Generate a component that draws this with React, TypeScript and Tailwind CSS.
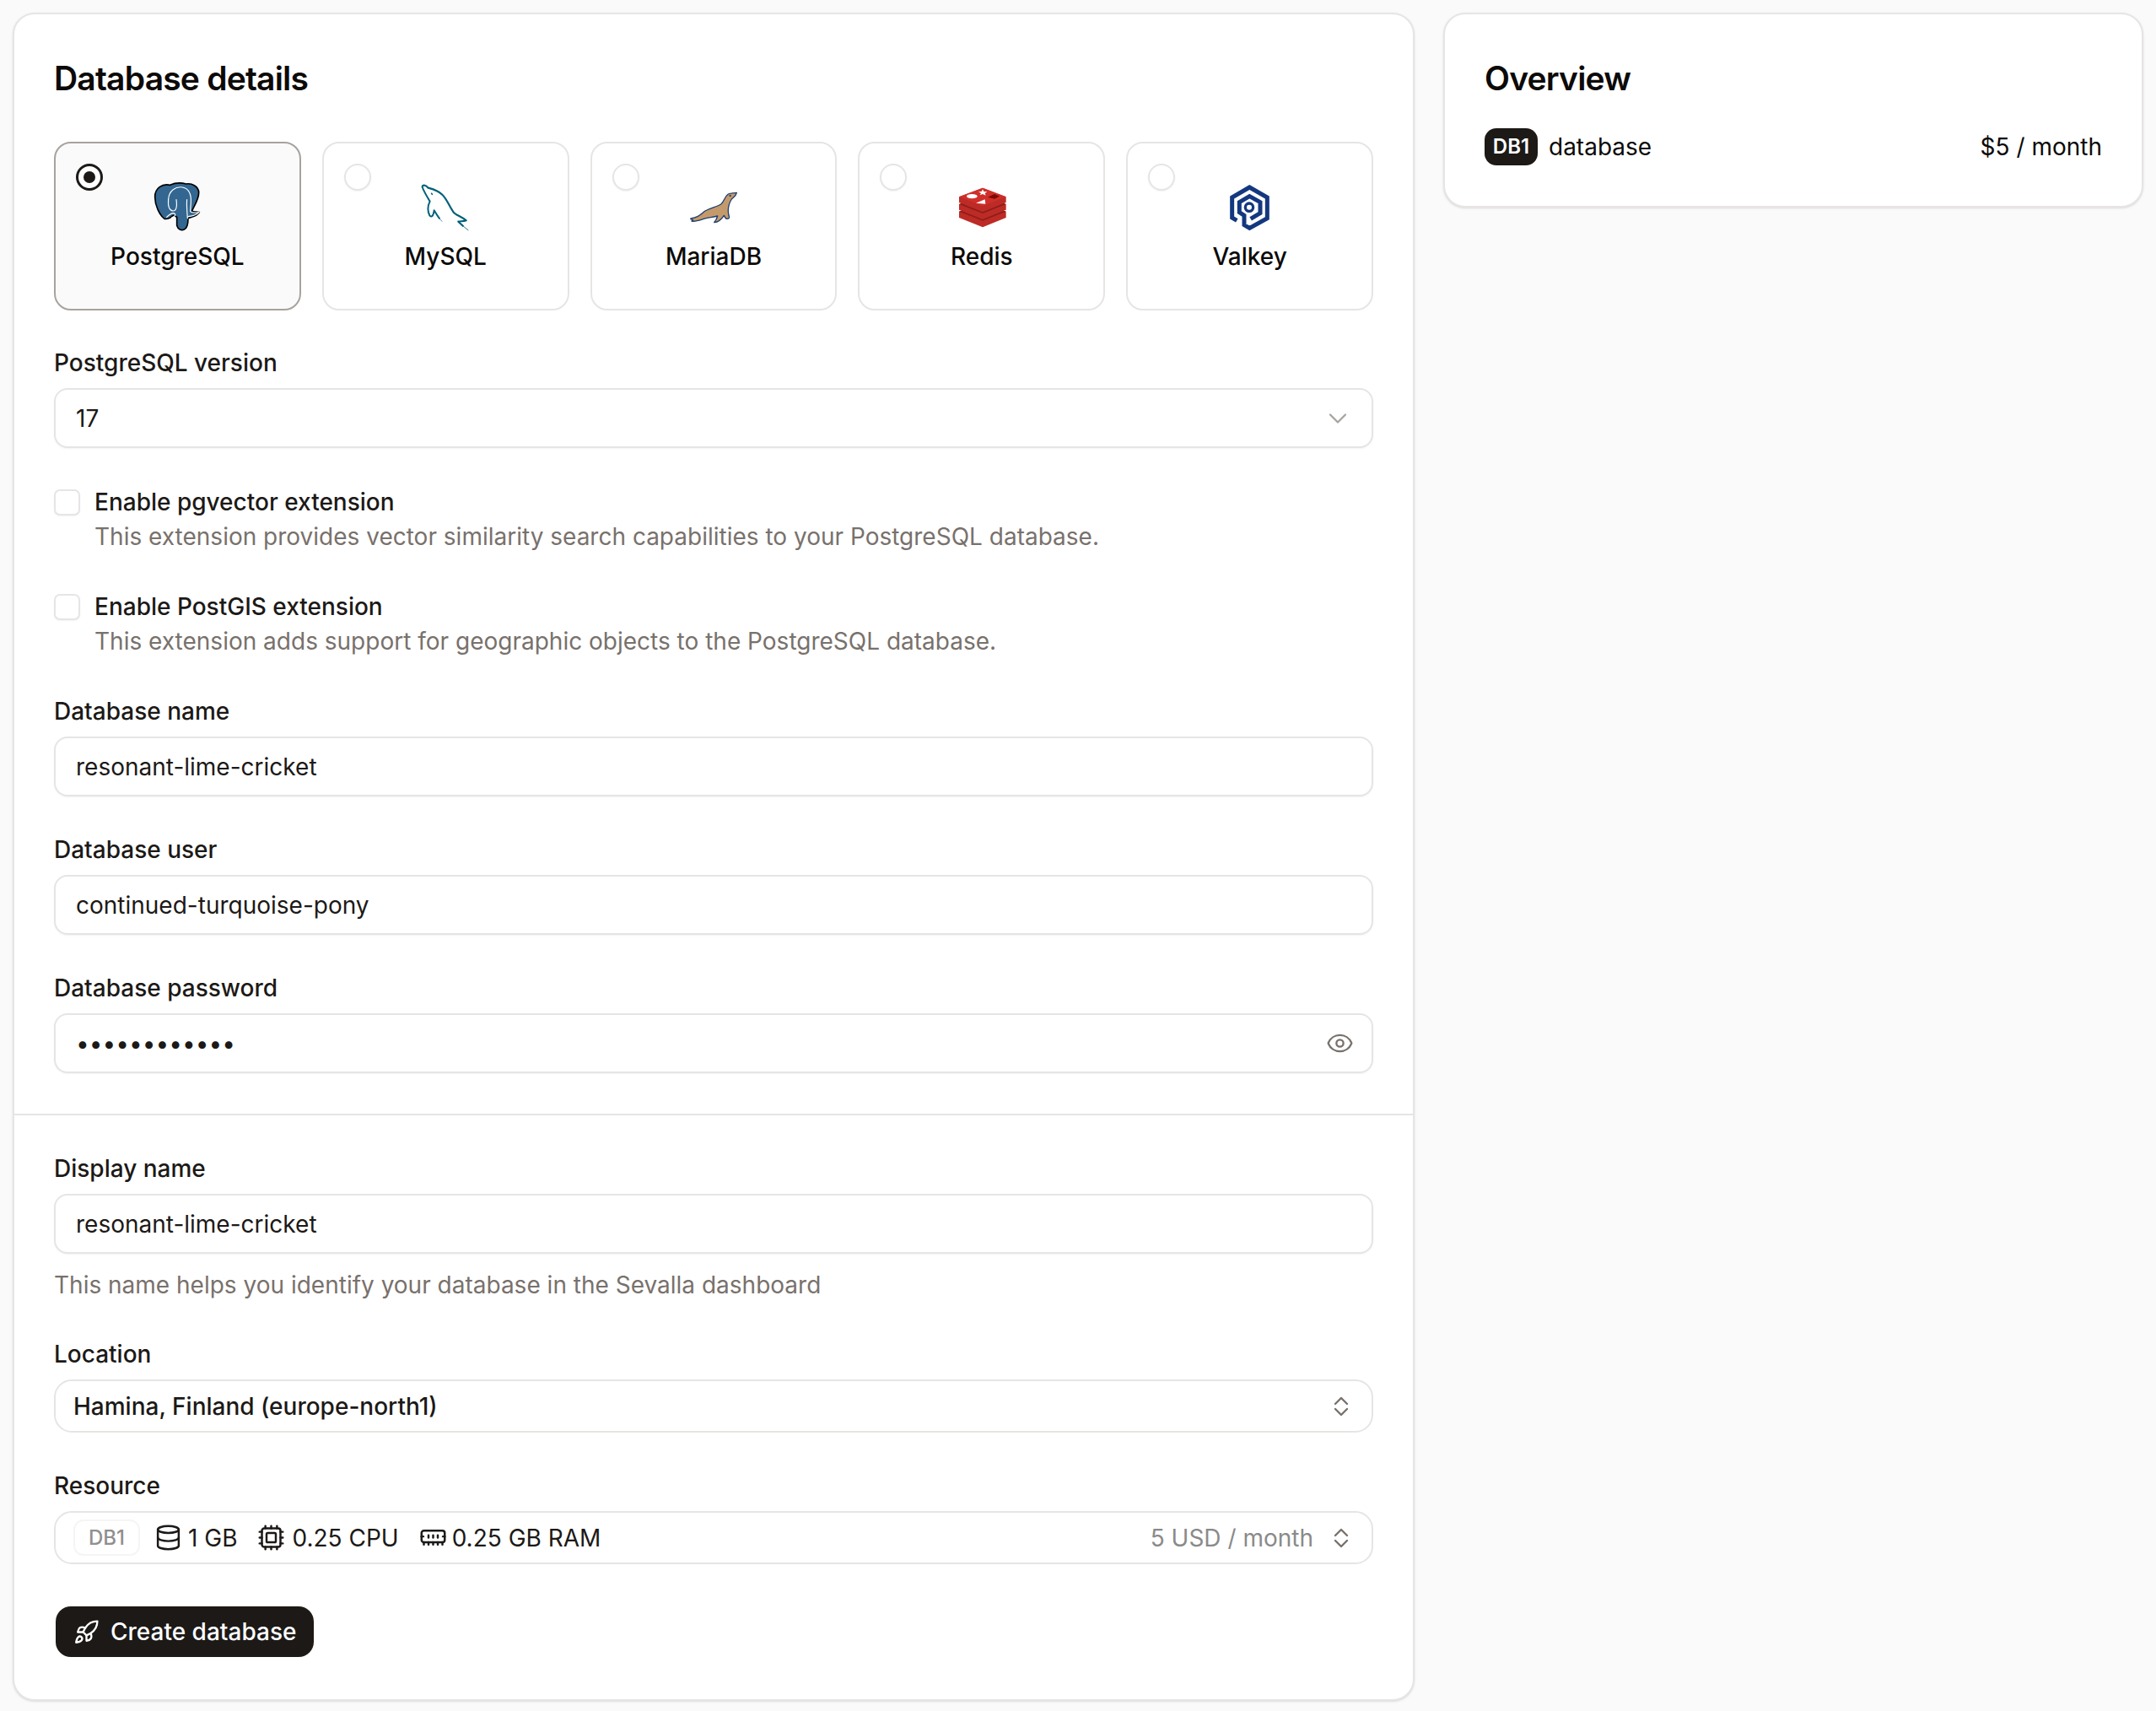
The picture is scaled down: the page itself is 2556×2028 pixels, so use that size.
import type { ReactNode } from "react";
import { ChevronDown, Cpu, Database, Eye, MemoryStick, Rocket } from "lucide-react";

function ElephantLogo() {
  return (
    <svg width="120" height="90" viewBox="-27 0 360 270" fill="none">
      <path
        d="M128 58C100 52 74 68 74 100C74 130 90 165 108 178C120 180 130 174 138 166C146 168 150 170 152 172L152 202C156 216 168 221 178 216C188 212 192 200 192 176C205 172 224 168 232 155C220 152 210 155 206 150C214 130 230 110 230 85C230 64 205 50 185 54C170 50 150 48 128 58Z"
        fill="#336791"
        stroke="#000"
        strokeWidth="5"
        strokeLinejoin="round"
      />
      <g stroke="#fff" strokeWidth="3.5" strokeLinecap="round">
        <path d="M122 108C124 78 148 62 172 66C192 70 204 88 202 120L200 150" />
        <path d="M122 108C120 130 124 148 138 150C148 150 154 140 150 110" />
        <path d="M188 110C186 124 188 150 190 176" />
        <path d="M116 172C122 166 130 158 140 158C150 160 148 170 134 174" />
        <path d="M200 152C208 158 220 156 230 155C222 165 208 168 192 170" />
      </g>
    </svg>
  );
}

function DolphinLogo() {
  return (
    <svg width="120" height="90" viewBox="-34 0 360 270" fill="none">
      <path
        d="M63 63C68 56 76 58 85 68C100 72 118 76 135 92C152 108 160 135 176 156C186 166 204 170 220 184C210 188 200 186 192 188L210 205"
        stroke="#00607a"
        strokeWidth="6.5"
        strokeLinejoin="round"
      />
      <path d="M208 203L228 219" stroke="#00607a" strokeWidth="2.5" />
      <path
        d="M63 63C70 82 80 98 91 116C84 130 82 150 90 166C98 176 104 165 106 148C112 158 118 168 126 178"
        stroke="#00607a"
        strokeWidth="6"
        strokeLinejoin="round"
      />
      <path d="M124 176L135 188" stroke="#00607a" strokeWidth="2" />
      <path d="M96 86L100 93" stroke="#00607a" strokeWidth="4.5" />
    </svg>
  );
}

function SealLogo() {
  return (
    <svg width="120" height="90" viewBox="-42 0 360 270" fill="none">
      <path
        d="M220 85C210 88 200 85 190 90C178 98 176 116 165 125C150 136 128 138 108 150C96 158 88 170 70 174C62 175 58 176 56 178L64 182L60 186C75 190 95 180 112 176C125 173 140 172 152 168C150 176 146 184 140 191C152 190 165 182 175 166C178 172 180 178 186 178C192 178 196 175 192 166C188 150 190 128 202 108C210 100 218 96 220 85Z"
        fill="#c49a6c"
        stroke="#1f3f6f"
        strokeWidth="4"
        strokeLinejoin="round"
      />
      <circle cx="197" cy="96" r="3.5" fill="#1f3f6f" />
    </svg>
  );
}

function RedisLogo() {
  return (
    <svg width="120" height="90" viewBox="-21 0 360 270" fill="none">
      <path d="M78 152L162 120L245 152V174L162 208L78 174Z" fill="#bd2b26" />
      <path d="M78 152L162 120L245 152L162 185Z" fill="#8f1d18" />
      <path d="M78 126L162 94L245 126V146L162 180L78 146Z" fill="#bd2b26" />
      <path d="M78 126L162 94L245 126L162 159Z" fill="#8f1d18" />
      <path d="M78 100L162 68L245 100V120L162 154L78 120Z" fill="#bd2b26" />
      <path d="M78 100L162 68L245 100L162 133Z" fill="#cf2e2a" />
      <ellipse cx="124" cy="98" rx="19" ry="8" fill="#fff" />
      <path
        d="M162 73L166 81L178 82L170 87L173 95L162 90L152 94L156 87L147 82L158 81Z"
        fill="#fff"
      />
      <path d="M138 122L170 109L172 125Z" fill="#fff" />
      <path d="M180 101L204 90L222 98L204 107Z" fill="#7a0c00" />
    </svg>
  );
}

function ValkeyLogo() {
  return (
    <svg width="120" height="90" viewBox="-27 0 360 270" fill="none">
      <path
        d="M106 184L89 174V102L151 66L214 102V176L151 211L132 200V166L115 155V119L151 98L189 119V158L155 178"
        stroke="#14387f"
        strokeWidth="15"
      />
      <circle cx="150" cy="137" r="14" stroke="#14387f" strokeWidth="10" />
    </svg>
  );
}

function UpDownIcon() {
  return (
    <svg
      width="18"
      height="24"
      viewBox="0 0 18 24"
      fill="none"
      stroke="#78716c"
      strokeWidth="2.4"
      strokeLinecap="round"
      strokeLinejoin="round"
    >
      <path d="M2 9L9 2L16 9" />
      <path d="M2 15L9 22L16 15" />
    </svg>
  );
}

type EngineTileProps = {
  name: string;
  selected?: boolean;
  logo: ReactNode;
};

function EngineTile({ name, selected, logo }: EngineTileProps) {
  return (
    <div
      className={
        selected
          ? "relative flex h-[200px] flex-col items-center rounded-[20px] border-2 border-[#a8a29e] bg-[#fafafa]"
          : "relative flex h-[200px] flex-col items-center rounded-[20px] border-2 border-[#e7e5e4] bg-white"
      }
    >
      {selected ? (
        <span className="absolute left-[24px] top-[24px] flex h-[32px] w-[32px] items-center justify-center rounded-full border-[3px] border-[#1c1917] bg-white">
          <span className="h-[14px] w-[14px] rounded-full bg-[#1c1917]" />
        </span>
      ) : (
        <span className="absolute left-[24px] top-[24px] h-[32px] w-[32px] rounded-full border-2 border-[#e7e5e4] bg-white shadow-xs" />
      )}
      <div className="mt-[30px] flex h-[90px] w-[120px] justify-center">{logo}</div>
      <span className="mt-[-4px] text-[28px] leading-[36px] font-medium text-[#0c0a09]">
        {name}
      </span>
    </div>
  );
}

type FieldProps = {
  label: string;
  className?: string;
  children: ReactNode;
};

function Field({ label, className, children }: FieldProps) {
  return (
    <div className={className}>
      <label className="mb-[12px] block text-[28px] leading-[36px] font-medium text-[#1c1917]">
        {label}
      </label>
      {children}
    </div>
  );
}

function TextInput({ value, type = "text" }: { value: string; type?: string }) {
  return (
    <input
      readOnly
      type={type}
      value={value}
      className="block h-[71px] w-full rounded-[16px] border-2 border-[#e7e5e4] bg-white px-[24px] text-[28px] text-[#1c1917] shadow-xs outline-none"
    />
  );
}

function CheckRow({
  title,
  text,
  className,
}: {
  title: string;
  text: string;
  className?: string;
}) {
  return (
    <div className={`flex gap-[17px] ${className ?? ""}`}>
      <span className="mt-[5px] h-[31px] w-[31px] shrink-0 rounded-[7px] border-2 border-[#e7e5e4] bg-white shadow-xs" />
      <div>
        <p className="text-[28px] leading-[41px] font-medium text-[#1c1917]">{title}</p>
        <p className="text-[28px] leading-[41px] text-[#78716c]">{text}</p>
      </div>
    </div>
  );
}

export default function App() {
  return (
    <div
      className="flex min-h-[2028px] items-start gap-[34px] bg-[#fafafa] pl-[15px] pt-[15px] text-[#0c0a09]"
      style={{ fontFamily: "Inter, sans-serif" }}
    >
      <main className="w-[1662px] rounded-[26px] border-2 border-[#e7e5e4] bg-white shadow-sm">
        <section className="px-[47px] pb-[48px] pt-[55px]">
          <h2 className="text-[39px] leading-[42px] font-semibold tracking-[-0.8px] text-[#0c0a09]">
            Database details
          </h2>

          <div className="mt-[54px] grid grid-cols-5 gap-[25px]">
            <EngineTile name="PostgreSQL" selected logo={<ElephantLogo />} />
            <EngineTile name="MySQL" logo={<DolphinLogo />} />
            <EngineTile name="MariaDB" logo={<SealLogo />} />
            <EngineTile name="Redis" logo={<RedisLogo />} />
            <EngineTile name="Valkey" logo={<ValkeyLogo />} />
          </div>

          <Field label="PostgreSQL version" className="mt-[44px]">
            <div className="flex h-[71px] items-center justify-between rounded-[16px] border-2 border-[#e7e5e4] bg-white pl-[24px] pr-[22px] shadow-xs">
              <span className="text-[28px] text-[#1c1917]">17</span>
              <ChevronDown size={36} strokeWidth={1.5} className="text-[#a8a29e]" />
            </div>
          </Field>

          <CheckRow
            className="mt-[44px]"
            title="Enable pgvector extension"
            text="This extension provides vector similarity search capabilities to your PostgreSQL database."
          />
          <CheckRow
            className="mt-[42px]"
            title="Enable PostGIS extension"
            text="This extension adds support for geographic objects to the PostgreSQL database."
          />

          <Field label="Database name" className="mt-[44px]">
            <TextInput value="resonant-lime-cricket" />
          </Field>
          <Field label="Database user" className="mt-[45px]">
            <TextInput value="continued-turquoise-pony" />
          </Field>
          <Field label="Database password" className="mt-[45px]">
            <div className="relative">
              <TextInput type="password" value="abcdefghijkl" />
              <Eye
                size={33}
                strokeWidth={1.7}
                className="absolute right-[23px] top-[19px] text-[#78716c]"
              />
            </div>
          </Field>
        </section>

        <section className="border-t-2 border-[#e7e5e4] px-[47px] pb-[50px] pt-[45px]">
          <Field label="Display name">
            <TextInput value="resonant-lime-cricket" />
            <p className="mt-[19px] text-[28px] leading-[36px] text-[#78716c]">
              This name helps you identify your database in the Sevalla dashboard
            </p>
          </Field>

          <Field label="Location" className="mt-[46px]">
            <div className="flex h-[63px] items-center justify-between rounded-[21px] border-2 border-[#e7e5e4] bg-white pl-[21px] pr-[27px]">
              <span className="text-[28px] font-medium text-[#1c1917]">
                Hamina, Finland (europe-north1)
              </span>
              <UpDownIcon />
            </div>
          </Field>

          <Field label="Resource" className="mt-[45px]">
            <div className="flex h-[63px] items-center justify-between rounded-[21px] border-2 border-[#e7e5e4] bg-white pl-[21px] pr-[27px]">
              <div className="flex items-center text-[28px] text-[#1c1917]">
                <span className="mr-[17px] flex h-[43px] w-[79px] items-center justify-center rounded-[12px] border-2 border-[#f5f5f4] text-[24px] font-medium text-[#8f8f8f]">
                  DB1
                </span>
                <Database size={33} strokeWidth={1.8} className="mr-[7px]" />
                <span>1 GB</span>
                <Cpu size={33} strokeWidth={1.8} className="ml-[24px] mr-[8px]" />
                <span>0.25 CPU</span>
                <MemoryStick size={33} strokeWidth={1.8} className="ml-[24px] mr-[6px]" />
                <span>0.25 GB RAM</span>
              </div>
              <div className="flex items-center gap-[24px]">
                <span className="text-[28px] text-[#8a8a8a]">5 USD / month</span>
                <UpDownIcon />
              </div>
            </div>
          </Field>

          <button className="mt-[50px] ml-[2px] flex h-[60px] w-[306px] items-center gap-[13px] rounded-[18px] bg-[#1c1917] pl-[21px] text-[28px] font-medium text-white">
            <Rocket size={31} strokeWidth={1.8} />
            Create database
          </button>
        </section>
      </main>

      <aside className="w-[830px] rounded-[26px] border-2 border-[#e7e5e4] bg-white px-[47px] pb-[48px] pt-[55px] shadow-sm">
        <h2 className="text-[39px] leading-[42px] font-semibold tracking-[-0.8px]">Overview</h2>
        <div className="mt-[38px] flex items-center justify-between">
          <div className="flex items-center gap-[13px]">
            <span className="flex h-[44px] w-[63px] items-center justify-center rounded-[14px] bg-[#1c1917] text-[24px] font-semibold text-white">
              DB1
            </span>
            <span className="text-[28px]">database</span>
          </div>
          <span className="text-[28px]">$5 / month</span>
        </div>
      </aside>
    </div>
  );
}
